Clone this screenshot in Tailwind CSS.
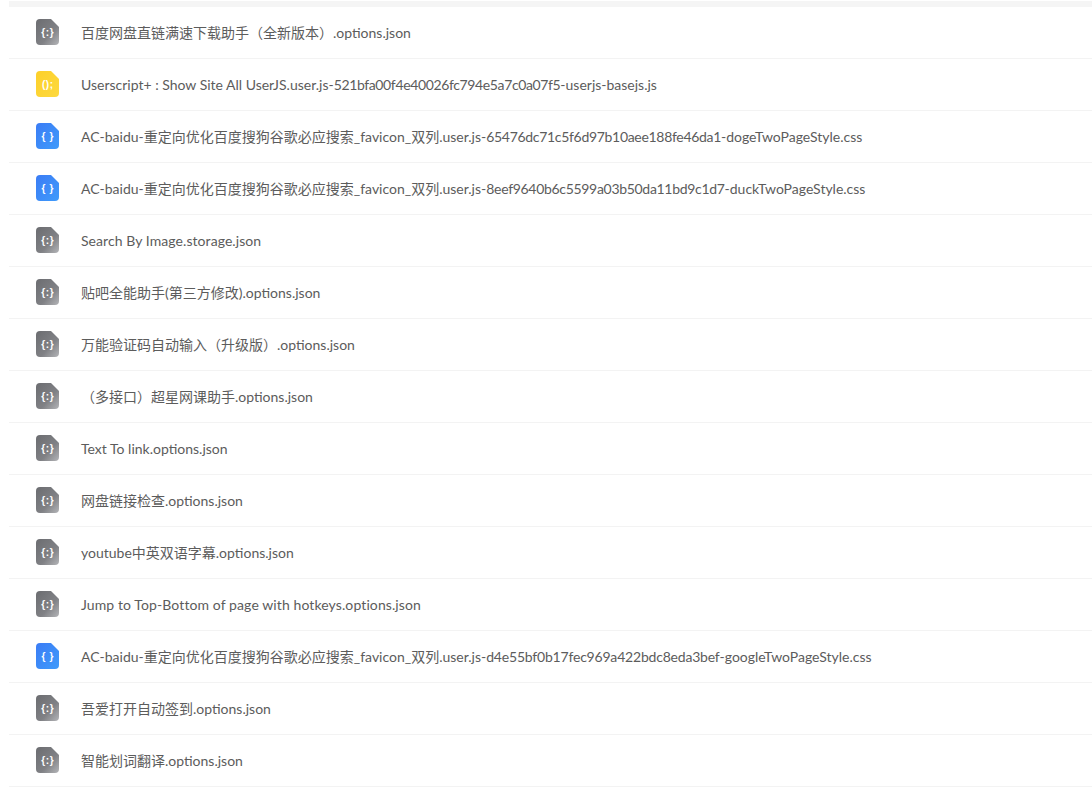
<!DOCTYPE html>
<html><head><meta charset="utf-8"><script src="https://cdn.jsdelivr.net/npm/@tailwindcss/browser@4"></script></head>
<body class="bg-white overflow-hidden">
<svg width="0" height="0" class="absolute"><defs>
<linearGradient id="g" x1="0" y1="0" x2="1" y2="1"><stop offset="0" stop-color="#6b6c70"/><stop offset="0.6" stop-color="#808185"/><stop offset="1" stop-color="#b4b5b8"/></linearGradient>
<linearGradient id="b" x1="0" y1="0" x2="1" y2="1"><stop offset="0" stop-color="#3b7cf5"/><stop offset="1" stop-color="#3f9bfb"/></linearGradient>
<linearGradient id="y" x1="0" y1="0" x2="1" y2="1"><stop offset="0" stop-color="#fdd02a"/><stop offset="1" stop-color="#fdd93f"/></linearGradient>
</defs></svg>
<div class="h-screen overflow-hidden pl-[9px] pt-px font-['Lato','Noto_Sans_CJK_SC',sans-serif] text-[14px] text-[#5c5c5c]">
<div class="h-[6px] bg-[#f5f5f5]"></div>
<ul>
<li class="h-[52px] flex items-center border-b border-[#f3f3f3] pl-[27px]"><svg class="w-[23px] h-[26px] mr-[22px] -mt-px" viewBox="0 0 23 26"><path d="M4 0H15L23 8V22a4 4 0 0 1-4 4H4a4 4 0 0 1-4-4V4a4 4 0 0 1 4-4Z" fill="url(#g)"/><text x="11.8" y="16.8" text-anchor="middle" fill="#fff" font-size="10" font-weight="700" letter-spacing="0.6" font-family="Liberation Sans, sans-serif">{:}</text></svg><span>百度网盘直链满速下载助手（全新版本）.options.json</span></li>
<li class="h-[52px] flex items-center border-b border-[#f3f3f3] pl-[27px]"><svg class="w-[23px] h-[26px] mr-[22px] -mt-px" viewBox="0 0 23 26"><path d="M4 0H15L23 8V22a4 4 0 0 1-4 4H4a4 4 0 0 1-4-4V4a4 4 0 0 1 4-4Z" fill="url(#y)"/><text x="11.8" y="16.8" text-anchor="middle" fill="#fff" font-size="10" font-weight="700" letter-spacing="0.6" font-family="Liberation Sans, sans-serif">();</text></svg><span>Userscript+ : Show Site All UserJS.user.js-<span class="tracking-[-0.37px]">521bfa00f4e40026fc794e5a7c0a07f5</span>-userjs-basejs.js</span></li>
<li class="h-[52px] flex items-center border-b border-[#f3f3f3] pl-[27px]"><svg class="w-[23px] h-[26px] mr-[22px] -mt-px" viewBox="0 0 23 26"><path d="M4 0H15L23 8V22a4 4 0 0 1-4 4H4a4 4 0 0 1-4-4V4a4 4 0 0 1 4-4Z" fill="url(#b)"/><text x="11.8" y="16.8" text-anchor="middle" fill="#fff" font-size="10" font-weight="700" letter-spacing="0.6" font-family="Liberation Sans, sans-serif">{ }</text></svg><span>AC-baidu-重定向优化百度搜狗谷歌必应搜索_favicon_双列.user.js-<span class="tracking-[-0.31px]">65476dc71c5f6d97b10aee188fe46da1</span>-dogeTwoPageStyle.css</span></li>
<li class="h-[52px] flex items-center border-b border-[#f3f3f3] pl-[27px]"><svg class="w-[23px] h-[26px] mr-[22px] -mt-px" viewBox="0 0 23 26"><path d="M4 0H15L23 8V22a4 4 0 0 1-4 4H4a4 4 0 0 1-4-4V4a4 4 0 0 1 4-4Z" fill="url(#b)"/><text x="11.8" y="16.8" text-anchor="middle" fill="#fff" font-size="10" font-weight="700" letter-spacing="0.6" font-family="Liberation Sans, sans-serif">{ }</text></svg><span>AC-baidu-重定向优化百度搜狗谷歌必应搜索_favicon_双列.user.js-<span class="tracking-[-0.31px]">8eef9640b6c5599a03b50da11bd9c1d7</span>-duckTwoPageStyle.css</span></li>
<li class="h-[52px] flex items-center border-b border-[#f3f3f3] pl-[27px]"><svg class="w-[23px] h-[26px] mr-[22px] -mt-px" viewBox="0 0 23 26"><path d="M4 0H15L23 8V22a4 4 0 0 1-4 4H4a4 4 0 0 1-4-4V4a4 4 0 0 1 4-4Z" fill="url(#g)"/><text x="11.8" y="16.8" text-anchor="middle" fill="#fff" font-size="10" font-weight="700" letter-spacing="0.6" font-family="Liberation Sans, sans-serif">{:}</text></svg><span class="tracking-[0.07px]">Search By Image.storage.json</span></li>
<li class="h-[52px] flex items-center border-b border-[#f3f3f3] pl-[27px]"><svg class="w-[23px] h-[26px] mr-[22px] -mt-px" viewBox="0 0 23 26"><path d="M4 0H15L23 8V22a4 4 0 0 1-4 4H4a4 4 0 0 1-4-4V4a4 4 0 0 1 4-4Z" fill="url(#g)"/><text x="11.8" y="16.8" text-anchor="middle" fill="#fff" font-size="10" font-weight="700" letter-spacing="0.6" font-family="Liberation Sans, sans-serif">{:}</text></svg><span>贴吧全能助手(第三方修改).options.json</span></li>
<li class="h-[52px] flex items-center border-b border-[#f3f3f3] pl-[27px]"><svg class="w-[23px] h-[26px] mr-[22px] -mt-px" viewBox="0 0 23 26"><path d="M4 0H15L23 8V22a4 4 0 0 1-4 4H4a4 4 0 0 1-4-4V4a4 4 0 0 1 4-4Z" fill="url(#g)"/><text x="11.8" y="16.8" text-anchor="middle" fill="#fff" font-size="10" font-weight="700" letter-spacing="0.6" font-family="Liberation Sans, sans-serif">{:}</text></svg><span>万能验证码自动输入（升级版）.options.json</span></li>
<li class="h-[52px] flex items-center border-b border-[#f3f3f3] pl-[27px]"><svg class="w-[23px] h-[26px] mr-[22px] -mt-px" viewBox="0 0 23 26"><path d="M4 0H15L23 8V22a4 4 0 0 1-4 4H4a4 4 0 0 1-4-4V4a4 4 0 0 1 4-4Z" fill="url(#g)"/><text x="11.8" y="16.8" text-anchor="middle" fill="#fff" font-size="10" font-weight="700" letter-spacing="0.6" font-family="Liberation Sans, sans-serif">{:}</text></svg><span>（多接口）超星网课助手.options.json</span></li>
<li class="h-[52px] flex items-center border-b border-[#f3f3f3] pl-[27px]"><svg class="w-[23px] h-[26px] mr-[22px] -mt-px" viewBox="0 0 23 26"><path d="M4 0H15L23 8V22a4 4 0 0 1-4 4H4a4 4 0 0 1-4-4V4a4 4 0 0 1 4-4Z" fill="url(#g)"/><text x="11.8" y="16.8" text-anchor="middle" fill="#fff" font-size="10" font-weight="700" letter-spacing="0.6" font-family="Liberation Sans, sans-serif">{:}</text></svg><span>Text To link.options.json</span></li>
<li class="h-[52px] flex items-center border-b border-[#f3f3f3] pl-[27px]"><svg class="w-[23px] h-[26px] mr-[22px] -mt-px" viewBox="0 0 23 26"><path d="M4 0H15L23 8V22a4 4 0 0 1-4 4H4a4 4 0 0 1-4-4V4a4 4 0 0 1 4-4Z" fill="url(#g)"/><text x="11.8" y="16.8" text-anchor="middle" fill="#fff" font-size="10" font-weight="700" letter-spacing="0.6" font-family="Liberation Sans, sans-serif">{:}</text></svg><span>网盘链接检查.options.json</span></li>
<li class="h-[52px] flex items-center border-b border-[#f3f3f3] pl-[27px]"><svg class="w-[23px] h-[26px] mr-[22px] -mt-px" viewBox="0 0 23 26"><path d="M4 0H15L23 8V22a4 4 0 0 1-4 4H4a4 4 0 0 1-4-4V4a4 4 0 0 1 4-4Z" fill="url(#g)"/><text x="11.8" y="16.8" text-anchor="middle" fill="#fff" font-size="10" font-weight="700" letter-spacing="0.6" font-family="Liberation Sans, sans-serif">{:}</text></svg><span>youtube中英双语字幕.options.json</span></li>
<li class="h-[52px] flex items-center border-b border-[#f3f3f3] pl-[27px]"><svg class="w-[23px] h-[26px] mr-[22px] -mt-px" viewBox="0 0 23 26"><path d="M4 0H15L23 8V22a4 4 0 0 1-4 4H4a4 4 0 0 1-4-4V4a4 4 0 0 1 4-4Z" fill="url(#g)"/><text x="11.8" y="16.8" text-anchor="middle" fill="#fff" font-size="10" font-weight="700" letter-spacing="0.6" font-family="Liberation Sans, sans-serif">{:}</text></svg><span class="tracking-[0.1px]">Jump to Top-Bottom of page with hotkeys.options.json</span></li>
<li class="h-[52px] flex items-center border-b border-[#f3f3f3] pl-[27px]"><svg class="w-[23px] h-[26px] mr-[22px] -mt-px" viewBox="0 0 23 26"><path d="M4 0H15L23 8V22a4 4 0 0 1-4 4H4a4 4 0 0 1-4-4V4a4 4 0 0 1 4-4Z" fill="url(#b)"/><text x="11.8" y="16.8" text-anchor="middle" fill="#fff" font-size="10" font-weight="700" letter-spacing="0.6" font-family="Liberation Sans, sans-serif">{ }</text></svg><span>AC-baidu-重定向优化百度搜狗谷歌必应搜索_favicon_双列.user.js-<span class="tracking-[-0.2px]">d4e55bf0b17fec969a422bdc8eda3bef</span>-googleTwoPageStyle.css</span></li>
<li class="h-[52px] flex items-center border-b border-[#f3f3f3] pl-[27px]"><svg class="w-[23px] h-[26px] mr-[22px] -mt-px" viewBox="0 0 23 26"><path d="M4 0H15L23 8V22a4 4 0 0 1-4 4H4a4 4 0 0 1-4-4V4a4 4 0 0 1 4-4Z" fill="url(#g)"/><text x="11.8" y="16.8" text-anchor="middle" fill="#fff" font-size="10" font-weight="700" letter-spacing="0.6" font-family="Liberation Sans, sans-serif">{:}</text></svg><span>吾爱打开自动签到.options.json</span></li>
<li class="h-[52px] flex items-center border-b border-[#f3f3f3] pl-[27px]"><svg class="w-[23px] h-[26px] mr-[22px] -mt-px" viewBox="0 0 23 26"><path d="M4 0H15L23 8V22a4 4 0 0 1-4 4H4a4 4 0 0 1-4-4V4a4 4 0 0 1 4-4Z" fill="url(#g)"/><text x="11.8" y="16.8" text-anchor="middle" fill="#fff" font-size="10" font-weight="700" letter-spacing="0.6" font-family="Liberation Sans, sans-serif">{:}</text></svg><span>智能划词翻译.options.json</span></li>
</ul>
</div>
</body></html>
